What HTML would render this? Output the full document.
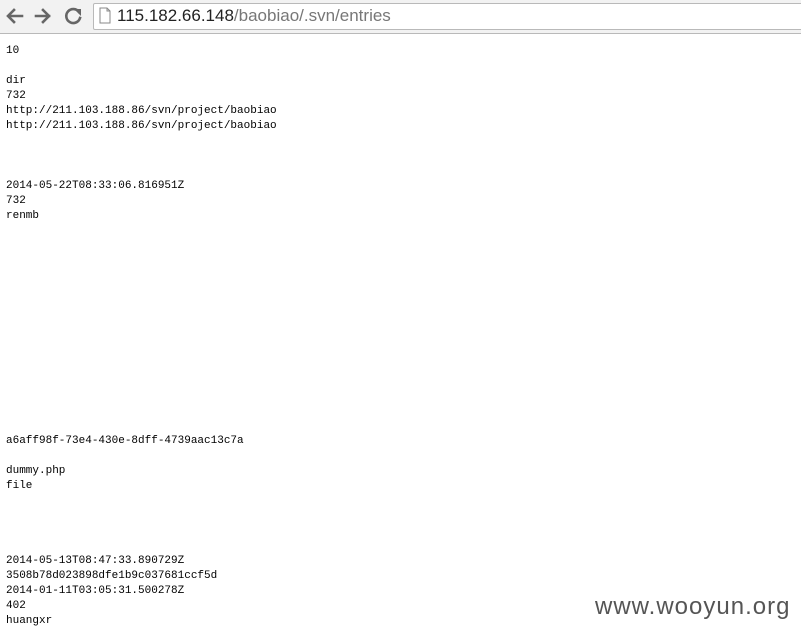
<!DOCTYPE html>
<html><head><style>
body{margin:0;width:801px;height:636px;overflow:hidden;background:#fff;position:relative}
.bar{position:absolute;left:0;top:0;width:801px;height:33px;background:#f2f2f2;border-bottom:1px solid #b9b9b9}
.addr{position:absolute;left:93px;top:3px;width:712px;height:25px;background:#fff;border:1px solid #b9b9b9;border-radius:2px}
.url{position:absolute;left:117px;top:4px;font:17px "Liberation Sans",sans-serif;color:#222;line-height:24px}
.url span{color:#777}
pre{position:absolute;left:6px;top:44px;margin:0;font:11px/15px "Liberation Mono",monospace;color:#000}
.wm{position:absolute;left:595px;top:593px;font:24px "Liberation Sans",sans-serif;color:#555;letter-spacing:1px}
</style></head><body>
<div class="bar">
<svg width="90" height="33" style="position:absolute;left:0;top:0">
<g stroke="#666" stroke-width="2.6" fill="none" stroke-linecap="square">
<path d="M9 16H22M14 10L8 16L14 22"/>
<path d="M36 16H49M43 10L49 16L43 22"/>
<path d="M79 12A7 7 0 1 0 80 18"/>
</g>
<path d="M74 9L81 9L81 16Z" fill="#666"/>
</svg>
<div class="addr"></div>
<svg width="14" height="18" style="position:absolute;left:98px;top:7px"><path d="M2 1H9L12 4V16H2Z M9 1V4H12" fill="#fff" stroke="#888"/></svg>
<div class="url">115.182.66.148<span>/baobiao/.svn/entries</span></div>
</div>
<pre>10

dir
732
http://211.103.188.86/svn/project/baobiao
http://211.103.188.86/svn/project/baobiao



2014-05-22T08:33:06.816951Z
732
renmb














a6aff98f-73e4-430e-8dff-4739aac13c7a

dummy.php
file




2014-05-13T08:47:33.890729Z
3508b78d023898dfe1b9c037681ccf5d
2014-01-11T03:05:31.500278Z
402
huangxr</pre>
<div class="wm">www.wooyun.org</div>
</body></html>
